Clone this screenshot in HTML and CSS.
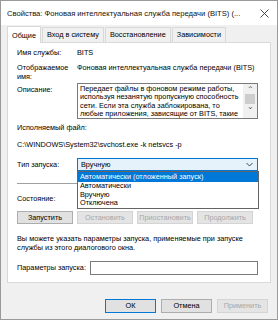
FILE: index.html
```html
<!DOCTYPE html>
<html lang="ru">
<head>
    <meta charset="utf-8">
    <link rel="stylesheet" href="styles.css">
</head>
<body>
    <div class="window">
        <div class="titlebar">
            <span class="title">Свойства: Фоновая интеллектуальная служба передачи (BITS) (...</span>
            <svg class="close" width="9" height="9" viewBox="0 0 9 9">
                <path d="M0.5 0.5 L8.5 8.5 M8.5 0.5 L0.5 8.5" stroke="#333" stroke-width="0.9" fill="none"/>
            </svg>
        </div>

        <div class="body">
            <div class="tabs">
                <div class="tab active">Общие</div>
                <div class="tab">Вход в систему</div>
                <div class="tab">Восстановление</div>
                <div class="tab">Зависимости</div>
            </div>

            <div class="panel">
                <div class="row row-name">
                    <div class="label">Имя службы:</div>
                    <div class="value">BITS</div>
                </div>
                <div class="row row-display">
                    <div class="label">Отображаемое имя:</div>
                    <div class="value">Фоновая интеллектуальная служба передачи (BITS)</div>
                </div>
                <div class="row row-desc">
                    <div class="label">Описание:</div>
                    <div class="textarea">
                        <div class="textarea-text">Передает файлы в фоновом режиме работы,<br>используя незанятую пропускную способность<br>сети. Если эта служба заблокирована, то<br>любые приложения, зависящие от BITS, такие</div>
                        <div class="scrollbar">
                            <span class="arrow">&#8963;</span>
                            <span class="thumb"></span>
                            <span class="arrow down">&#8964;</span>
                        </div>
                    </div>
                </div>
                <div class="line exe-label">Исполняемый файл:</div>
                <div class="line exe-path">C:\WINDOWS\System32\svchost.exe -k netsvcs -p</div>
                <div class="row row-type">
                    <div class="label">Тип запуска:</div>
                    <div class="select">
                        <span>Вручную</span>
                        <svg class="chevron" width="7" height="5" viewBox="0 0 7 5">
                            <path d="M0.5 1 L3.5 4 L6.5 1" stroke="#333" stroke-width="0.9" fill="none"/>
                        </svg>
                        <div class="dropdown">
                            <div class="option selected">Автоматически (отложенный запуск)</div>
                            <div class="option">Автоматически</div>
                            <div class="option">Вручную</div>
                            <div class="option">Отключена</div>
                        </div>
                    </div>
                </div>
                <div class="separator"></div>
                <div class="line state">Состояние:</div>
                <div class="buttons">
                    <div class="btn">Запустить</div>
                    <div class="btn disabled">Остановить</div>
                    <div class="btn disabled">Приостановить</div>
                    <div class="btn disabled">Продолжить</div>
                </div>
                <div class="hint">Вы можете указать параметры запуска, применяемые при запуске<br>службы из этого диалогового окна.</div>
                <div class="row row-params">
                    <div class="label wide">Параметры запуска:</div>
                    <div class="input"></div>
                </div>
            </div>

            <div class="footer">
                <div class="btn default">ОК</div>
                <div class="btn">Отмена</div>
                <div class="btn disabled">Применить</div>
            </div>
        </div>
    </div>
</body>
</html>
```

FILE: styles.css
```css
/* Windows 10 service properties dialog, scaled down */
html, body {
    margin: 0;
    padding: 0;
}
body {
    width: 278px;
    height: 320px;
    font-family: "Liberation Sans", Arial, sans-serif;
    font-size: 7.3px;
    color: #000;
    background-color: #fff;
}
.window {
    width: 276px;
    height: 318px;
    border: 1px solid #9a9a9a;
    background-color: #f0f0f0;
    display: flex;
    flex-direction: column;
}
.titlebar {
    height: 24px;
    background-color: #fff;
    display: flex;
    align-items: center;
    padding: 0 8px 0 6px;
    font-size: 7.6px;
}
.title {
    flex: 1;
    white-space: nowrap;
    overflow: hidden;
    color: #111;
}
.close {
    margin-left: 6px;
}
.body {
    flex: 1;
    padding: 0 6px 0 6px;
    display: flex;
    flex-direction: column;
}
/* tabs */
.tabs {
    display: flex;
    align-items: flex-end;
    height: 17px;
}
.tab {
    height: 14px;
    line-height: 14px;
    padding: 0 4px;
    border: 1px solid #d9d9d9;
    border-bottom: none;
    margin-left: 1px;
    background-color: #f0f0f0;
    white-space: nowrap;
}
.tab.active {
    height: 16px;
    line-height: 17px;
    background-color: #fff;
    margin-left: 0;
    position: relative;
    top: 1px;
    z-index: 1;
    padding: 0 4px;
}
.panel {
    background-color: #fff;
    border: 1px solid #d9d9d9;
    height: 241px;
    padding: 5px 12px 0 9px;
    box-sizing: border-box;
}
.row {
    display: flex;
    align-items: flex-start;
}
.label {
    width: 60px;
    flex-shrink: 0;
    line-height: 9px;
}
.label.wide {
    width: auto;
    margin-right: 4px;
    line-height: 14px;
}
.value {
    line-height: 9px;
    white-space: nowrap;
}
.row-name {
    line-height: 10px;
}
.row-display {
    margin-top: 6px;
}
.row-desc {
    margin-top: 2px;
}
.row-desc .label {
    padding-top: 2px;
}
.textarea {
    width: 182px;
    height: 36px;
    border: 1px solid #7a7a7a;
    box-sizing: border-box;
    display: flex;
    overflow: hidden;
}
.textarea-text {
    flex: 1;
    line-height: 8.3px;
    padding: 1px 2px;
    white-space: nowrap;
    overflow: hidden;
}
.scrollbar {
    width: 14px;
    background-color: #f0f0f0;
    display: flex;
    flex-direction: column;
    align-items: center;
}
.arrow {
    height: 9px;
    line-height: 11px;
    font-size: 8px;
    color: #606060;
}
.arrow.down {
    line-height: 5px;
}
.thumb {
    width: 10px;
    height: 10px;
    background-color: #cdcdcd;
    margin-top: 1px;
}
.line {
    line-height: 9px;
}
.exe-label {
    margin-top: 4px;
}
.exe-path {
    margin-top: 8px;
}
.row-type {
    margin-top: 9px;
    align-items: center;
}
.select {
    position: relative;
    width: 182px;
    height: 13px;
    border: 1px solid #0078d7;
    background-color: #e5f1fb;
    box-sizing: border-box;
    display: flex;
    align-items: center;
    justify-content: space-between;
    padding: 0 4px 0 3px;
}
.dropdown {
    position: absolute;
    top: 12px;
    left: -1px;
    width: 182px;
    background-color: #fff;
    border: 1px solid #646464;
    box-sizing: border-box;
    z-index: 2;
}
.option {
    line-height: 8.5px;
    padding-left: 2px;
}
.option.selected {
    background-color: #0078d7;
    color: #fff;
    line-height: 10px;
}
.separator {
    height: 1px;
    background-color: #a0a0a0;
    margin-top: 12px;
}
.state {
    margin-top: 10px;
}
.buttons {
    display: flex;
    gap: 4px;
    margin-top: 8px;
}
.btn {
    width: 56px;
    height: 13px;
    line-height: 11px;
    text-align: center;
    box-sizing: border-box;
    border: 1px solid #adadad;
    background-color: #e1e1e1;
    white-space: nowrap;
}
.btn.disabled {
    border-color: #d4d4d4;
    background-color: #e4e4e4;
    color: #a8a8a8;
}
.btn.default {
    border-color: #0078d7;
}
.hint {
    margin-top: 10px;
    line-height: 9px;
}
.row-params {
    margin-top: 9px;
}
.input {
    flex: 1;
    height: 14px;
    border: 1px solid #7a7a7a;
    box-sizing: border-box;
}
.footer {
    display: flex;
    justify-content: flex-end;
    gap: 5px;
    margin-top: 16px;
    padding-right: 3px;
}
.footer .btn {
    width: 51px;
    height: 14px;
    line-height: 12px;
}
```
